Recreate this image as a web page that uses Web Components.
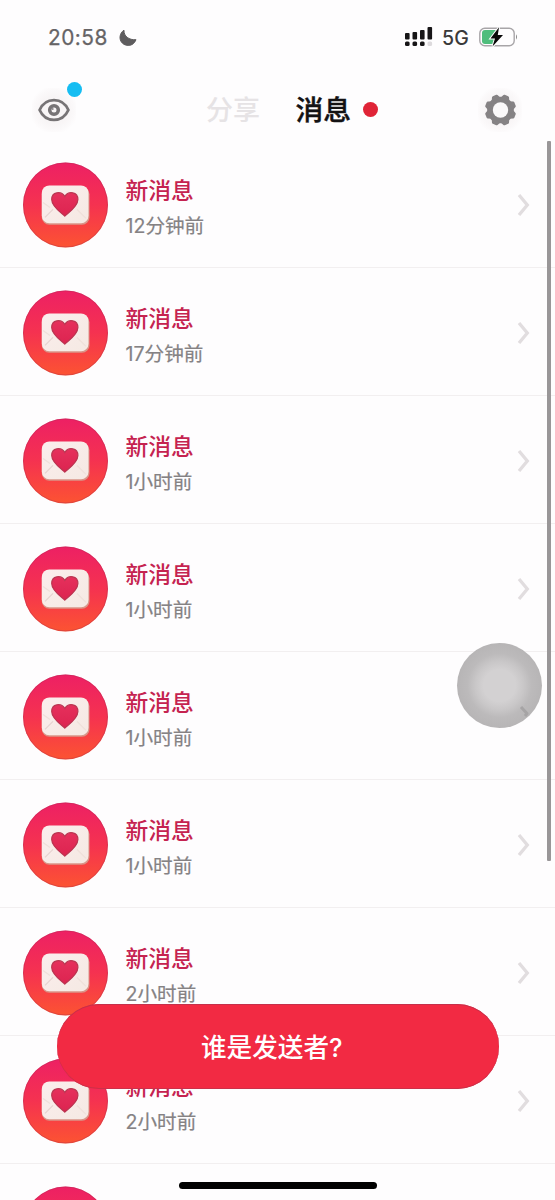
<!DOCTYPE html>
<html lang="zh-CN">
<head>
<meta charset="utf-8">
<title>消息</title>
<style>
html,body{margin:0;height:100%;overflow:hidden;background:#fefdfe}
body{font-family:Inter,"Noto Sans CJK SC",sans-serif}
</style>
</head>
<body>
<message-app></message-app>
<script>
const define = (name, html, setup) => {
  customElements.define(name, class extends HTMLElement {
    connectedCallback() {
      if (this.shadowRoot) return;
      const t = document.createElement('template');
      t.innerHTML = html;
      this.attachShadow({mode: 'open'}).append(t.content.cloneNode(true));
      if (setup) setup(this.shadowRoot, this);
    }
  });
};

define('status-bar', `<style>
:host{display:flex;height:75px;box-sizing:border-box;padding:0 37px 0 48px;align-items:center;color:#666466;font-size:20.8px;line-height:24px}
.time{width:60px;white-space:nowrap;letter-spacing:.5px;-webkit-text-stroke:.25px #666466}
.moon{margin-left:11px;margin-top:1px}
.space{flex:1}
.net{font-size:19.5px;color:#3a393a;width:27px;margin:0 10px 0 9px;font-weight:500;letter-spacing:.2px;white-space:nowrap}
svg{display:block}
</style>
<span class="time">20:58</span>
<svg class="moon" width="18" height="18" viewBox="0 0 18 18"><path d="M5 1.200C4.600 7 10 11.300 17 10.700C15 15.500 11.500 16.800 8 16.300C3.500 15.800 .8 12 1 8C1.200 5 2.800 2.500 5 1.200Z" fill="#5e5c5e" stroke="#5e5c5e" stroke-width="1" stroke-linejoin="round"/></svg>
<span class="space"></span>
<svg width="29" height="21" viewBox="0 0 29 21"><g fill="#171517"><rect x="1" y="6" width="4.600" height="6.500" rx="1"/><rect x="8.500" y="5" width="4.600" height="7.500" rx="1"/><rect x="16" y="3" width="4.600" height="9.500" rx="1"/><rect x="23.500" y="0" width="4.600" height="12.500" rx="1"/><rect x="1" y="14.500" width="4.600" height="4.500" rx="1.500"/><rect x="8.500" y="14.500" width="4.600" height="4.500" rx="1.500"/><rect x="16" y="14.500" width="4.600" height="4.500" rx="1.500"/></g><rect x="23.500" y="14.500" width="4.600" height="4.500" rx="1.500" fill="#dddadd"/></svg>
<span class="net">5G</span>
<svg width="39" height="21" viewBox="0 0 39 21"><rect x=".8" y="1.300" width="34.400" height="17.400" rx="5" fill="none" stroke="#a8a5a8" stroke-width="1.400"/><path d="M6 3H17V17H6Q3 17 3 14V6Q3 3 6 3Z" fill="#4fbd7c"/><path d="M37 7.300Q39 10 37 12.700Z" fill="#888"/><path d="M20 .3L11.500 11.500H16L13.500 19.500L24 8H18.800Z" fill="#080808" stroke="#fefdfe" stroke-width="2" paint-order="stroke"/></svg>`);

define('icon-button', `<style>
:host{display:flex;position:relative;width:44px;height:44px;border-radius:13px;background:radial-gradient(#f8f5f6 45%,#fbf9fa 65%,#fefdfe 78%);align-items:center;justify-content:center}
::slotted(svg){display:block}
.dot{display:none}
:host([badge]) .dot{display:block;position:absolute;left:35px;top:-6px;width:15px;height:15px;border-radius:50%;background:#16bdf2}
</style><slot></slot><i class="dot"></i>`);

define('nav-bar', `<style>
:host{display:grid;grid-template-columns:44px 1fr 44px;height:65px;padding:0 32px;align-items:center}
.tabs{display:flex;align-items:center;padding:4px 0 0 130px;font-size:27px;line-height:40px;white-space:nowrap}
.off{color:#e6e3e5;width:54px;font-weight:500;padding-top:2px}
.on{color:#141214;margin-left:35.500px;font-size:27.800px;font-weight:500;-webkit-text-stroke:.4px #141214;padding-top:1px}
.red{width:15px;height:15px;border-radius:50%;background:#e02437;margin-left:11.500px}
.gear{margin-left:-1px}
icon-button{margin-top:4px}
</style>
<icon-button badge><svg width="32" height="24" viewBox="0 0 32 24" fill="none" stroke="#777476"><path d="M1.600 12C4.500 5.500 9.500 2.100 16 2.100S27.500 5.500 30.400 12C27.500 18.500 22.500 21.900 16 21.900S4.500 18.500 1.600 12Z" stroke-width="2.800" stroke-linejoin="round"/><circle cx="16" cy="12" r="4.300" stroke-width="3.600"/><circle cx="14.700" cy="11" r="1" fill="#8a8789" stroke="none"/></svg></icon-button>
<div class="tabs"><span class="off">分享</span><span class="on">消息</span><i class="red"></i></div>
<icon-button class="gear"><svg width="32" height="32" viewBox="-16.500 -16 32 32"><g fill="#858284"><circle r="13.300"/><g id="teeth"></g></g><circle r="7.700" fill="#fbf9fa"/></svg></icon-button>`, root => {
  const g = root.getElementById('teeth');
  for (let i = 0; i < 8; i++) {
    const p = document.createElementNS('http://www.w3.org/2000/svg', 'path');
    p.setAttribute('d', 'M-5 -11L-3 -15Q-2.500 -15.700 -1.800 -15.700H1.800Q2.500 -15.700 3 -15L5 -11Z');
    p.setAttribute('transform', `rotate(${22.5 + i * 45})`);
    g.append(p);
  }
});

define('heart-avatar', `<style>
:host{display:block;width:85px;height:86px}svg{display:block}
</style>
<svg width="85" height="86" viewBox="0 -.4 85 86">
<defs><linearGradient id="bg" x1="0" y1="0" x2="0" y2="1"><stop offset="0" stop-color="#ed2064"/><stop offset=".5" stop-color="#f53250"/><stop offset="1" stop-color="#fc5332"/></linearGradient>
<linearGradient id="paper" x1="0" y1="0" x2="1" y2="1"><stop offset="0" stop-color="#fbeeed"/><stop offset="1" stop-color="#f5e9e3"/></linearGradient>
<linearGradient id="heart" x1="0" y1="0" x2="0" y2="1"><stop offset="0" stop-color="#e6305c"/><stop offset="1" stop-color="#dc2450"/></linearGradient></defs>
<circle cx="42.500" cy="42.500" r="42.500" fill="url(#bg)"/>
<circle cx="42.500" cy="42.500" r="42" fill="none" stroke="#a52e50" stroke-opacity=".35"/>
<rect x="18.800" y="24.300" width="47.700" height="38" rx="7.500" fill="#d99588"/>
<rect x="18.800" y="23" width="46.700" height="37.900" rx="7.500" fill="url(#paper)"/>
<path d="M22 55L30 47" fill="none" stroke="#e6d3d0" stroke-width="1.300"/><path d="M20 40L27 45M54 47L63 56" fill="none" stroke="#efe0da" stroke-width="1.200"/>
<path d="M41.800 53.700C38 50 28.700 44 28.700 37C28.700 29.500 38 28 41.800 34C45.600 28 54.900 29.500 54.900 37C54.900 44 45.600 50 41.800 53.700Z" fill="url(#heart)" stroke="#bb3551" stroke-width="1.200"/>
</svg>`);

define('message-row', `<style>
:host{display:flex;box-sizing:border-box;height:128px;padding:22px 25px 0 23px;border-bottom:1.500px solid #f2eff0;align-items:flex-start;flex:none}
.copy{flex:1;margin-left:17.500px;padding-top:10.500px}
.title{font-size:22.800px;line-height:35px;font-weight:500;color:#c52350;white-space:nowrap}
.time{font-size:19.600px;line-height:35px;color:#858284;white-space:nowrap;padding-top:1px;-webkit-text-stroke:.2px #858284}
svg{display:block;margin-top:31px}
:host([plain]) svg{visibility:hidden}
:host([peek]){height:36px;border:0;overflow:hidden}
</style>
<heart-avatar></heart-avatar>
<div class="copy"><div class="title"><slot name="title"></slot></div><div class="time"><slot></slot></div></div>
<svg width="13" height="24" viewBox="0 0 13 24"><path d="M2 2L10.300 12L2 22" fill="none" stroke="#e1dddf" stroke-width="3.300"/></svg>`);

define('sender-button', `<style>
:host{display:block}
button{display:flex;width:100%;height:100%;border:0;border-radius:42px;background:#f22a43;box-shadow:inset 0 1px #c5304b,inset 0 -1px #cc3049;color:#fff;align-items:center;justify-content:center;font:500 25.600px/36px Inter,"Noto Sans CJK SC",sans-serif;padding:2px 12px 0 0;margin:0;white-space:nowrap}
</style><button><slot></slot></button>`);

define('assistive-touch', `<style>
:host{display:block;border-radius:50%;background:radial-gradient(circle,#d3d1d2 0 16px,#c9c7c8 24px,#bcbabb 32px,#b7b5b6 42px)}
svg{display:block;margin:61px 0 0 60px}
</style><svg width="14" height="16" viewBox="0 0 14 16"><path d="M4 3L10 9.500L8 12" fill="none" stroke="#a6a4a5" stroke-width="3" stroke-linejoin="round"/></svg>`);

define('message-app', `<style>
:host{display:flex;flex-direction:column;position:relative;width:555px;height:1200px;overflow:hidden;background:#fefdfe}
main{display:flex;flex-direction:column;flex:1;min-height:0;overflow:hidden}
.bar{position:absolute;right:4.500px;top:141px;width:4px;height:720px;background:#999698;border-radius:1px}
sender-button{position:absolute;left:57px;top:1004px;width:441.500px;height:85px}
assistive-touch{position:absolute;left:457px;top:643px;width:85px;height:85px}
.home{position:absolute;left:179px;top:1181.500px;width:198px;height:7.500px;border-radius:4px;background:#000}
</style>
<status-bar></status-bar><nav-bar></nav-bar>
<main></main>
<div class="bar"></div><assistive-touch></assistive-touch>
<sender-button>谁是发送者?</sender-button><div class="home"></div>`, root => {
  const times = ['12分钟前', '17分钟前', '1小时前', '1小时前', '1小时前', '1小时前', '2小时前', '2小时前'];
  root.querySelector('main').innerHTML = times.map((t, i) =>
    `<message-row${i === 4 ? ' plain' : ''}><span slot="title">新消息</span>${t}</message-row>`).join('') +
    '<message-row plain peek></message-row>';
});
</script>
</body>
</html>
